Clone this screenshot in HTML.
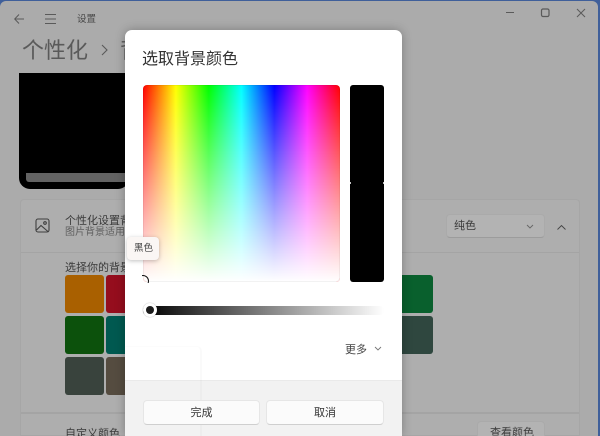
<!DOCTYPE html>
<html lang="zh-CN"><head><meta charset="utf-8"><style>
html,body{margin:0;padding:0;width:600px;height:436px;overflow:hidden;background:#3f5f9a}
*{box-sizing:border-box}
body{font-family:"Liberation Sans","Noto Sans CJK SC",sans-serif;position:relative}
#w{position:absolute;left:0;top:0;width:600px;height:436px;overflow:hidden;filter:blur(.35px)}
.a{position:absolute}
.t{position:absolute;white-space:nowrap;line-height:1}
.sw{position:absolute;width:39px;height:38px;border-radius:3px}
.btn{position:absolute;background:#fbfbfb;border:1px solid #e6e6e6;border-bottom-color:#cfcfcf;border-radius:4px;text-align:center;font-size:11px;color:#333}
</style></head><body><div id="w">
<div class="a" style="left:0;top:0;width:600px;height:436px;background:#3f5f9a"></div>
<div class="a" style="left:0;top:1px;width:598px;height:435px;background:#ababab;border-radius:6px 6px 0 0"></div>

<svg class="a" style="left:0;top:0" width="600" height="40" fill="none" stroke="#5a5a5a">
<path d="M24 19H15M19 14.5L14.7 19L19 23.5" stroke-width="1"/>
<path d="M45 14.5H56M45 19H56M45 23.5H56" stroke-width="1"/>
<path d="M506 12.5H514" stroke-width="1"/>
<rect x="541.5" y="9" width="7.5" height="7.5" rx="1.5" stroke-width="1.2"/>
<path d="M577 9L585 17M585 9L577 17" stroke-width="1"/>
</svg>
<div class="t" style="left:77px;top:15px;font-size:9.5px;color:#484848">设置</div>
<div class="t" style="left:22px;top:40px;font-size:22px;color:#5a5a5a">个性化</div>
<svg class="a" style="left:100px;top:44px" width="10" height="12" fill="none" stroke="#5a5a5a"><path d="M2 1L7 6L2 11" stroke-width="1.1"/></svg>
<div class="t" style="left:120px;top:40px;font-size:22px;color:#5a5a5a">背</div>

<div class="a" style="left:19px;top:73px;width:110px;height:116px;background:#000;border-radius:0 0 11px 11px"></div>
<div class="a" style="left:26px;top:173px;width:103px;height:9px;background:#636363;border-radius:0 0 0 3px"></div>

<div class="a" style="left:20px;top:199px;width:560px;height:237px;background:#aeaeae;border:1px solid #a6a6a6;border-radius:4px 4px 0 0"></div>
<div class="a" style="left:21px;top:252px;width:558px;height:1px;background:#a4a4a4"></div>
<div class="a" style="left:21px;top:412px;width:558px;height:2px;background:#a4a4a4"></div>
<svg class="a" style="left:35px;top:218px" width="16" height="16" fill="none" stroke="#3f3f3f" stroke-width="1.1"><rect x="1" y="1" width="13" height="13" rx="2"/><circle cx="10" cy="5" r="1.3"/><path d="M1.5 12L6 7.5L13.5 14"/></svg>
<div class="t" style="left:65px;top:216px;font-size:11px;color:#3a3a3a">个性化设置背景</div>
<div class="t" style="left:65px;top:228px;font-size:10px;color:#5f5f5f">图片背景适用于当前桌面</div>
<div class="t" style="left:65px;top:263px;font-size:11px;color:#3a3a3a">选择你的背景颜色</div>
<div class="t" style="left:65px;top:429px;font-size:11px;color:#3a3a3a">自定义颜色</div>

<div class="a" style="left:446px;top:214px;width:99px;height:24px;background:#b3b3b3;border:1px solid #aaa;border-bottom-color:#9c9c9c;border-radius:4px"></div>
<div class="t" style="left:454px;top:221px;font-size:11px;color:#3a3a3a">纯色</div>
<svg class="a" style="left:526px;top:224px" width="8" height="6" fill="none" stroke="#666"><path d="M1 1L4 4L7 1" stroke-width=".9"/></svg>
<svg class="a" style="left:556px;top:223px" width="11" height="8" fill="none" stroke="#444"><path d="M1.5 6.5L5.5 2.5L9.5 6.5" stroke-width=".9"/></svg>
<div class="a" style="left:477px;top:421px;width:68px;height:20px;background:#b3b3b3;border:1px solid #aaa;border-radius:4px"></div>
<div class="t" style="left:490px;top:428px;font-size:11px;color:#3a3a3a">查看颜色</div>

<div class="sw" style="left:65px;top:275px;background:#a96000"></div>
<div class="sw" style="left:65px;top:316px;background:#0c510c"></div>
<div class="sw" style="left:65px;top:357px;background:#39433d"></div>
<div class="sw" style="left:106px;top:275px;background:#950d1d"></div>
<div class="sw" style="left:106px;top:316px;background:#005950"></div>
<div class="sw" style="left:106px;top:357px;background:#554c40"></div>
<div class="sw" style="left:394px;top:275px;background:#09602d"></div>
<div class="sw" style="left:394px;top:316px;background:#2f473f"></div>

<div class="a" style="left:125px;top:30px;width:277px;height:406px;background:#fff;border-radius:7px 7px 0 0;box-shadow:0 0 10px rgba(0,0,0,.28)"></div>
<div class="a" style="left:125px;top:380px;width:277px;height:56px;background:#f2f2f2;border-top:1px solid #eaeaea"></div>
<div class="a" style="left:125px;top:346px;width:77px;height:90px;border-right:2px solid rgba(0,0,0,.02);border-top:1px solid rgba(0,0,0,.01);border-radius:0 5px 0 0"></div>

<div class="t" style="left:142px;top:52px;font-size:16px;color:#333">选取背景颜色</div>

<div class="a" style="left:143px;top:85px;width:197px;height:197px;border-radius:4px;overflow:hidden;background:linear-gradient(90deg,#f00,#ff0 16.67%,#0f0 33.33%,#0ff 50%,#00f 66.67%,#f0f 83.33%,#f00)">
<div class="a" style="inset:0;background:linear-gradient(180deg,rgba(255,255,255,0),#fff)"></div>
<div class="a" style="inset:0;border:1px solid rgba(0,0,0,.05);border-radius:4px"></div>
</div>
<div class="a" style="left:350px;top:85px;width:34px;height:197px;background:#000;border-radius:3px"></div>
<div class="a" style="left:349px;top:182px;width:2px;height:2px;background:#fff;border-radius:50%"></div>
<div class="a" style="left:383px;top:182px;width:2px;height:2px;background:#fff;border-radius:50%"></div>

<div class="a" style="left:137px;top:275px;width:12px;height:12px;border-radius:50%;border:1.6px solid #111;clip-path:inset(0 0 4px 5px)"></div>

<div class="a" style="left:127px;top:237px;width:32px;height:23px;background:#faf6f4;border-radius:4px;box-shadow:0 1px 4px rgba(0,0,0,.25)"></div>
<div class="t" style="left:134px;top:244px;font-size:9.5px;color:#444">黑色</div>

<div class="a" style="left:143px;top:306px;width:241px;height:9px;border-radius:4px;background:linear-gradient(90deg,#000,#fff)"></div>
<div class="a" style="left:143px;top:303px;width:14px;height:14px;background:#fff;border-radius:50%;box-shadow:0 0 1px rgba(0,0,0,.4)"></div>
<div class="a" style="left:146px;top:306px;width:8px;height:8px;background:#1c1c1c;border-radius:50%"></div>

<div class="t" style="left:345px;top:345px;font-size:11px;color:#444">更多</div>
<svg class="a" style="left:374px;top:346px" width="8" height="6" fill="none" stroke="#777"><path d="M1 1L4 4L7 1" stroke-width=".9"/></svg>

<div class="btn" style="left:143px;top:400px;width:117px;height:25px;line-height:25px">完成</div>
<div class="btn" style="left:266px;top:400px;width:118px;height:25px;line-height:25px">取消</div>
</div></body></html>
